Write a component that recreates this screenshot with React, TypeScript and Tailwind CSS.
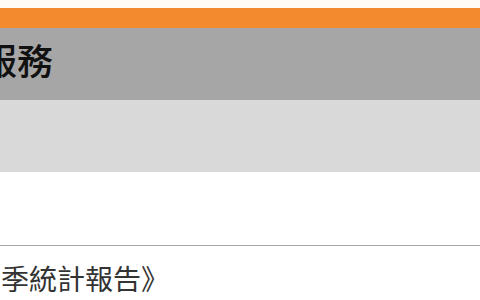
import React from "react";

export default function App() {
  return (
    <div
      className="w-[480px] h-[300px] overflow-hidden bg-white flex flex-col"
      style={{ fontFamily: '"Noto Sans CJK TC", "Noto Sans", sans-serif' }}
    >
      <div className="h-[8px] bg-[#fffcf5] shrink-0" />
      <div className="h-[20px] bg-[#f48a2e] shrink-0" />
      <div className="h-[72px] bg-[#a6a6a6] shrink-0 flex items-center overflow-hidden">
        <span className="-ml-[19px] text-[36px] leading-none font-medium text-[#111111] whitespace-nowrap pb-[10px]">
          服務
        </span>
      </div>
      <div className="h-[72px] bg-[#d9d9d9] shrink-0" />
      <div className="h-[73px] bg-white shrink-0" />
      <div className="h-[1px] bg-[#a9a9a9] shrink-0" />
      <div className="pt-[18px] overflow-hidden">
        <span className="block ml-[1px] text-[28px] leading-none text-[#333333] whitespace-nowrap">
          季統計報告》
        </span>
      </div>
    </div>
  );
}
